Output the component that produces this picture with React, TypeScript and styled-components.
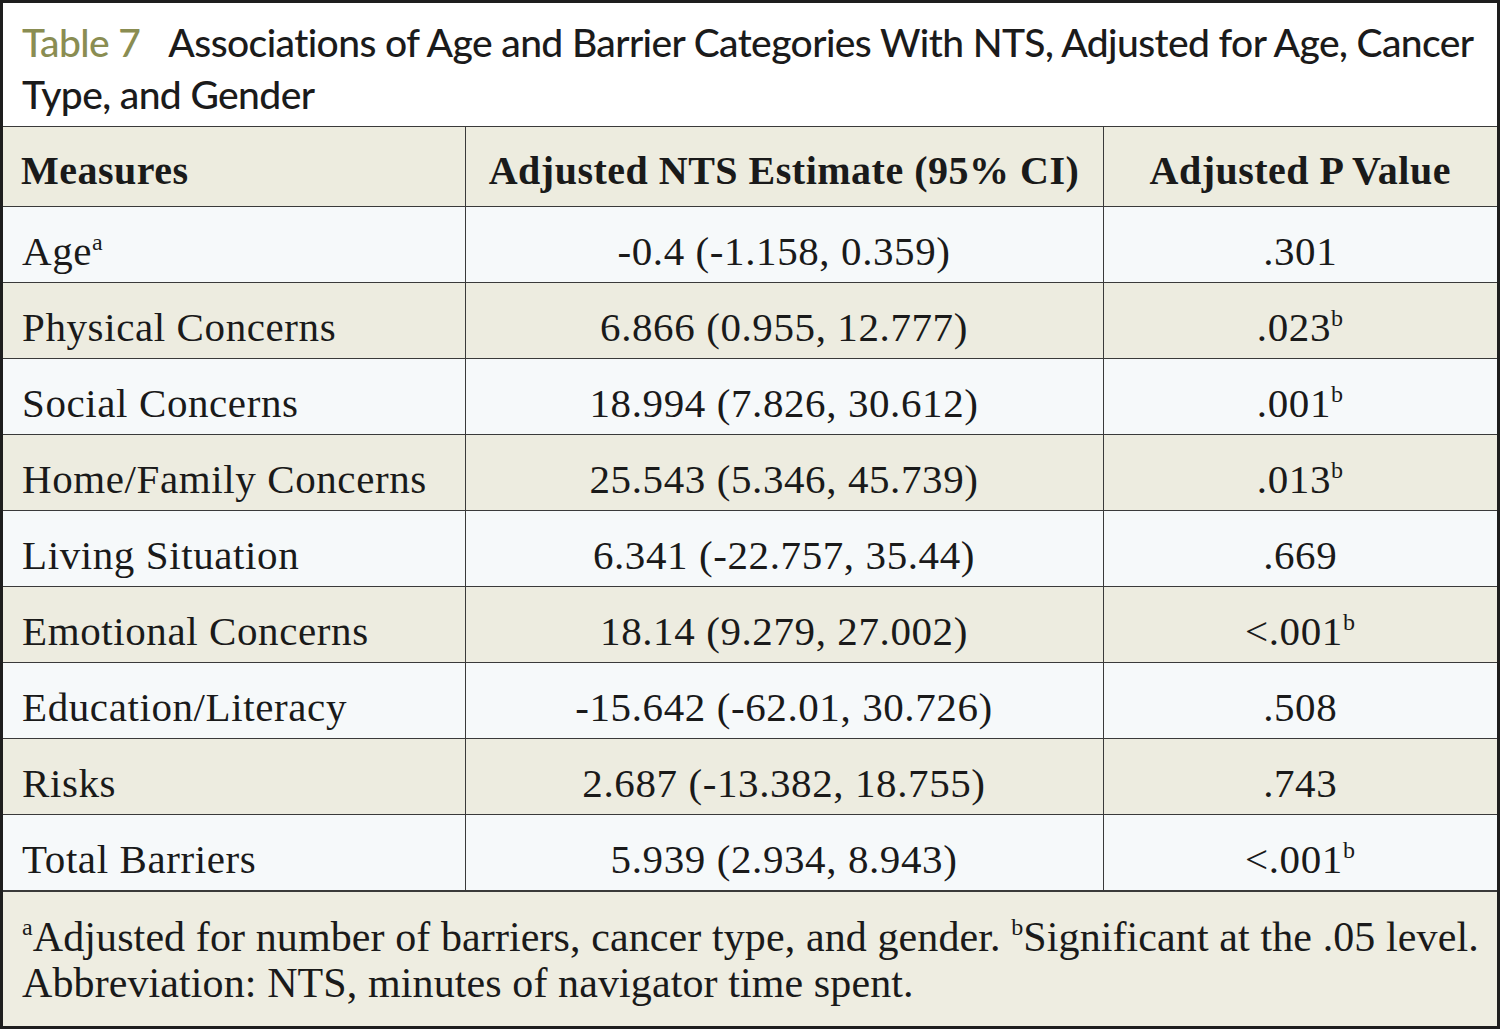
import * as React from 'react';
import styled, { createGlobalStyle } from 'styled-components';

const GlobalStyle = createGlobalStyle`
  html, body {
    margin: 0;
    padding: 0;
    background: #ffffff;
  }
`;

type Row = {
  measure: string;
  measureSup?: string;
  estimate: string;
  p: string;
  pSup?: string;
};

const rows: Row[] = [
  { measure: 'Age', measureSup: 'a', estimate: '-0.4 (-1.158, 0.359)', p: '.301' },
  { measure: 'Physical Concerns', estimate: '6.866 (0.955, 12.777)', p: '.023', pSup: 'b' },
  { measure: 'Social Concerns', estimate: '18.994 (7.826, 30.612)', p: '.001', pSup: 'b' },
  { measure: 'Home/Family Concerns', estimate: '25.543 (5.346, 45.739)', p: '.013', pSup: 'b' },
  { measure: 'Living Situation', estimate: '6.341 (-22.757, 35.44)', p: '.669' },
  { measure: 'Emotional Concerns', estimate: '18.14 (9.279, 27.002)', p: '<.001', pSup: 'b' },
  { measure: 'Education/Literacy', estimate: '-15.642 (-62.01, 30.726)', p: '.508' },
  { measure: 'Risks', estimate: '2.687 (-13.382, 18.755)', p: '.743' },
  { measure: 'Total Barriers', estimate: '5.939 (2.934, 8.943)', p: '<.001', pSup: 'b' },
];

const Frame = styled.div`
  box-sizing: border-box;
  width: 1500px;
  height: 1029px;
  border: 3px solid #1e1e1e;
  display: flex;
  flex-direction: column;
  background: #ffffff;
`;

const Title = styled.h1`
  margin: 0;
  box-sizing: border-box;
  height: 124px;
  padding: 13px 20px 0 19px;
  font-family: Lato, 'Open Sans', sans-serif;
  font-weight: 500;
  font-size: 39px;
  letter-spacing: -0.6px;
  line-height: 52px;
  color: #1b1b1b;
  border-bottom: 1px solid #3a3a3a;
`;

const Label = styled.span`
  display: inline-block;
  color: #8a8d52;
  margin-right: 28px;
`;

const Table = styled.table`
  border-collapse: collapse;
  table-layout: fixed;
  width: 100%;
  font-family: 'Liberation Serif', 'Times New Roman', serif;
  color: #1a1a1a;
`;

const HeadCell = styled.th<{ $left?: boolean }>`
  height: 72px;
  padding: 7px 0 0 ${(p) => (p.$left ? '18px' : '0')};
  background: #edecdf;
  font-size: 40px;
  font-weight: 700;
  letter-spacing: 0.5px;
  text-align: ${(p) => (p.$left ? 'left' : 'center')};
  border-right: 1px solid #3a3a3a;
  border-bottom: 1px solid #3a3a3a;
  &:last-child {
    border-right: none;
  }
`;

const BodyRow = styled.tr<{ $shade: boolean }>`
  background: ${(p) => (p.$shade ? '#edece0' : '#f6f9fa')};
`;

const Cell = styled.td<{ $left?: boolean }>`
  height: 63px;
  padding: 12px 0 0 ${(p) => (p.$left ? '19px' : '0')};
  font-size: 41px;
  letter-spacing: 0.6px;
  text-align: ${(p) => (p.$left ? 'left' : 'center')};
  border-right: 1px solid #3a3a3a;
  border-bottom: 1px solid #3a3a3a;
  &:last-child {
    border-right: none;
  }
  sup {
    font-size: 24px;
    line-height: 0;
    vertical-align: 15px;
  }
`;

const Footer = styled.div`
  flex: 1;
  background: #eeede1;
  border-top: 1px solid #3a3a3a;
  padding: 22px 18px 0 19px;
  font-family: 'Liberation Serif', 'Times New Roman', serif;
  font-size: 42px;
  letter-spacing: 0.1px;
  line-height: 46px;
  color: #1a1a1a;
  sup {
    font-size: 24px;
    line-height: 0;
    vertical-align: 16px;
  }
`;

export default function App() {
  return (
    <>
      <GlobalStyle />
      <Frame>
        <Title>
          <Label>Table 7</Label>Associations of Age and Barrier Categories With NTS, Adjusted for Age, Cancer
          Type, and Gender
        </Title>
        <Table>
          <colgroup>
            <col style={{ width: 462 }} />
            <col style={{ width: 638 }} />
            <col />
          </colgroup>
          <thead>
            <tr>
              <HeadCell $left>Measures</HeadCell>
              <HeadCell>Adjusted NTS Estimate (95% CI)</HeadCell>
              <HeadCell>Adjusted P Value</HeadCell>
            </tr>
          </thead>
          <tbody>
            {rows.map((r, i) => (
              <BodyRow key={r.measure} $shade={i % 2 === 1}>
                <Cell $left>
                  {r.measure}
                  {r.measureSup && <sup>{r.measureSup}</sup>}
                </Cell>
                <Cell>{r.estimate}</Cell>
                <Cell>
                  {r.p}
                  {r.pSup && <sup>{r.pSup}</sup>}
                </Cell>
              </BodyRow>
            ))}
          </tbody>
        </Table>
        <Footer>
          <sup>a</sup>Adjusted for number of barriers, cancer type, and gender. <sup>b</sup>Significant at the .05 level.
          <br />
          Abbreviation: NTS, minutes of navigator time spent.
        </Footer>
      </Frame>
    </>
  );
}
